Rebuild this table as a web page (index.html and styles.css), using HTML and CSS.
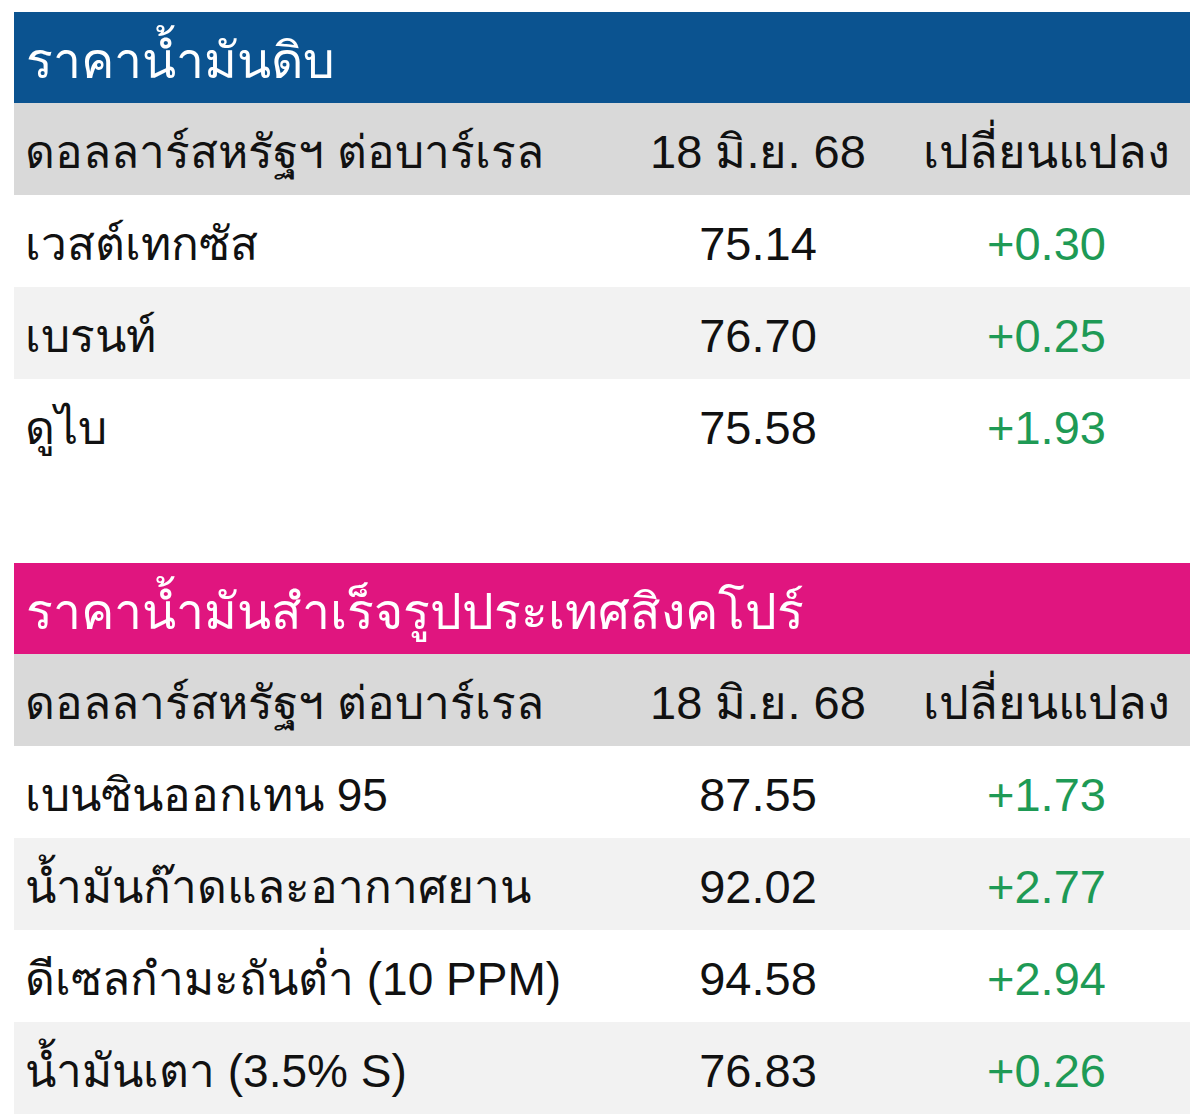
FILE: index.html
```html
<!DOCTYPE html>
<html lang="th">
<head>
<meta charset="utf-8">
<link rel="stylesheet" href="styles.css">
</head>
<body>
<div class="page">
  <section class="tbl">
    <div class="title blue">ราคาน้ำมันดิบ</div>
    <div class="row head"><div class="c1">ดอลลาร์สหรัฐฯ ต่อบาร์เรล</div><div class="c2">18 มิ.ย. 68</div><div class="c3">เปลี่ยนแปลง</div></div>
    <div class="row"><div class="c1">เวสต์เทกซัส</div><div class="c2">75.14</div><div class="c3 up">+0.30</div></div>
    <div class="row alt"><div class="c1">เบรนท์</div><div class="c2">76.70</div><div class="c3 up">+0.25</div></div>
    <div class="row"><div class="c1">ดูไบ</div><div class="c2">75.58</div><div class="c3 up">+1.93</div></div>
  </section>
  <section class="tbl second">
    <div class="title pink">ราคาน้ำมันสำเร็จรูปประเทศสิงคโปร์</div>
    <div class="row head"><div class="c1">ดอลลาร์สหรัฐฯ ต่อบาร์เรล</div><div class="c2">18 มิ.ย. 68</div><div class="c3">เปลี่ยนแปลง</div></div>
    <div class="row"><div class="c1">เบนซินออกเทน 95</div><div class="c2">87.55</div><div class="c3 up">+1.73</div></div>
    <div class="row alt"><div class="c1">น้ำมันก๊าดและอากาศยาน</div><div class="c2">92.02</div><div class="c3 up">+2.77</div></div>
    <div class="row"><div class="c1">ดีเซลกำมะถันต่ำ (10 PPM)</div><div class="c2">94.58</div><div class="c3 up">+2.94</div></div>
    <div class="row alt"><div class="c1">น้ำมันเตา (3.5% S)</div><div class="c2">76.83</div><div class="c3 up">+0.26</div></div>
  </section>
</div>
</body>
</html>
```
FILE: styles.css
```css
html, body {
  margin: 0;
  padding: 0;
  background: #ffffff;
}
body {
  font-family: "Liberation Sans", Tahoma, "Noto Sans", sans-serif;
  color: #111111;
}
.page {
  padding: 12px 10px 0 14px;
  width: 1176px;
}
.tbl {
  display: flex;
  flex-direction: column;
}
.second {
  margin-top: 92px;
}
.title {
  height: 91px;
  box-sizing: border-box;
  display: flex;
  align-items: center;
  padding: 6px 0 0 12px;
  font-size: 50px;
  color: #ffffff;
}
.blue { background: #0b5390; }
.pink { background: #e0157f; }
.row {
  display: grid;
  grid-template-columns: 599px 290px 287px;
  height: 92px;
  box-sizing: border-box;
  padding-top: 5px;
  align-items: center;
  font-size: 47px;
  background: #ffffff;
}
.row.head { background: #d9d9d9; }
.row.alt { background: #f2f2f2; }
.c1 { padding-left: 11px; white-space: nowrap; font-size: 46px; }
.c2, .c3 { text-align: center; white-space: nowrap; }
.up { color: #1e9a55; }
```
